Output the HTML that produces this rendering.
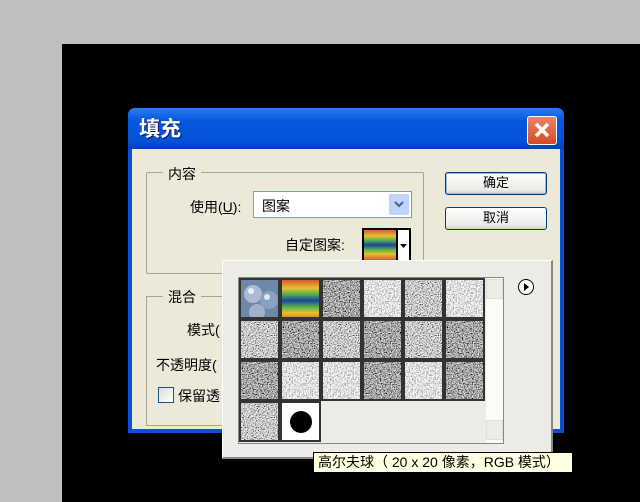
<!DOCTYPE html>
<html><head><meta charset="utf-8"><style>
*{margin:0;padding:0;box-sizing:border-box}
body{width:640px;height:502px;background:#c0c0c0;position:relative;overflow:hidden;font-family:"Liberation Sans","Noto Sans CJK SC",sans-serif;font-size:13px;color:#000}
.a{position:absolute}
.cell{position:absolute;width:41px;height:41px;border:2px solid #333;overflow:hidden;background:#999}
.cell svg{width:100%;height:100%;display:block}
.btn{position:absolute;border:1px solid #003c74;border-radius:3px;background:linear-gradient(#fff,#ecebe6 80%,#d6d0c5);text-align:center;line-height:20px;font-size:13px}
</style></head><body>
<svg width="0" height="0" style="position:absolute"><defs>
<filter id="n1"><feTurbulence type="fractalNoise" baseFrequency="0.9" numOctaves="2" seed="1"/><feColorMatrix type="saturate" values="0"/><feComponentTransfer><feFuncR type="linear" slope="3.2" intercept="-1.0"/><feFuncG type="linear" slope="3.2" intercept="-1.0"/><feFuncB type="linear" slope="3.2" intercept="-1.0"/><feFuncA type="table" tableValues="1 1"/></feComponentTransfer></filter>
<filter id="n2"><feTurbulence type="fractalNoise" baseFrequency="0.7" numOctaves="3" seed="5"/><feColorMatrix type="saturate" values="0"/><feComponentTransfer><feFuncR type="linear" slope="2.4" intercept="-0.45"/><feFuncG type="linear" slope="2.4" intercept="-0.45"/><feFuncB type="linear" slope="2.4" intercept="-0.45"/><feFuncA type="table" tableValues="1 1"/></feComponentTransfer></filter>
<filter id="n3"><feTurbulence type="fractalNoise" baseFrequency="0.8" numOctaves="2" seed="9"/><feColorMatrix type="saturate" values="0"/><feComponentTransfer><feFuncR type="linear" slope="2.4" intercept="-0.8"/><feFuncG type="linear" slope="2.4" intercept="-0.8"/><feFuncB type="linear" slope="2.4" intercept="-0.8"/><feFuncA type="table" tableValues="1 1"/></feComponentTransfer></filter>
<linearGradient id="rb" x1="0" y1="0" x2="0" y2="1"><stop offset="0" stop-color="#d85a2a"/><stop offset=".2" stop-color="#e8c030"/><stop offset=".35" stop-color="#50b050"/><stop offset=".5" stop-color="#2040a0"/><stop offset=".65" stop-color="#50b050"/><stop offset=".8" stop-color="#e8c030"/><stop offset="1" stop-color="#d85a2a"/></linearGradient>
</defs></svg>
<div class="a" style="left:62px;top:44px;width:578px;height:458px;background:#000"></div>
<div class="a" style="left:128px;top:108px;width:436px;height:325px;background:#0a4fd8;border-radius:7px 7px 0 0"></div>
<div class="a" style="left:128px;top:108px;width:436px;height:41px;background:linear-gradient(#2a7cf0,#0758e0 30%,#0352d8 80%,#0340b8);border-radius:7px 7px 0 0"></div>
<div class="a" style="left:139px;top:113px;color:#fff;font-size:21px;font-weight:bold;text-shadow:1px 1px 0 #0a1a60">填充</div>
<div class="a" style="left:527px;top:116px;width:30px;height:29px;border:1px solid #fff;border-radius:3px;background:linear-gradient(#e8846a,#d54a22)"><svg width="28" height="27"><path d="M8 7L20 19M20 7L8 19" stroke="#fff" stroke-width="3.5"/></svg></div>
<div class="a" style="left:132px;top:149px;width:428px;height:280px;background:#ece9d8"></div>
<div class="a" style="left:146px;top:172px;width:278px;height:102px;border:1px solid #a8a596;border-radius:2px"></div>
<div class="a" style="left:163px;top:164px;background:#ece9d8;padding:0 5px;font-size:14px">内容</div>
<div class="a" style="left:190px;top:197px;font-size:14px">使用(<u>U</u>):</div>
<div class="a" style="left:253px;top:191px;width:159px;height:27px;border:1px solid #7f9db9;background:#fff;padding:4px 8px;font-size:14px">图案</div>
<div class="a" style="left:389px;top:194px;width:20px;height:21px;background:#c1d3fb;border-radius:2px"><svg width="20" height="21"><path d="M6 8l4 4 4-4" stroke="#4d6185" stroke-width="2" fill="none"/></svg></div>
<div class="a" style="left:285px;top:235px;font-size:14px">自定图案:</div>
<div class="a" style="left:362px;top:228px;width:36px;height:34px;border:2px solid #000;overflow:hidden"><svg width="32" height="30"><rect width="32" height="30" fill="url(#rb)"/></svg></div>
<div class="a" style="left:397px;top:228px;width:14px;height:34px;border:2px solid #000;border-left:1px solid #000;background:#fff"><svg width="11" height="30"><path d="M2 14h7l-3.5 4z" fill="#000"/></svg></div>
<div class="btn" style="left:445px;top:172px;width:102px;height:23px;box-shadow:inset 0 0 0 1px #98b8ea">确定</div>
<div class="btn" style="left:445px;top:207px;width:102px;height:23px">取消</div>
<div class="a" style="left:146px;top:296px;width:100px;height:130px;border:1px solid #a8a596;border-right:none"></div>
<div class="a" style="left:163px;top:287px;background:#ece9d8;padding:0 5px;font-size:14px">混合</div>
<div class="a" style="left:187px;top:320px;font-size:14px">模式(</div>
<div class="a" style="left:156px;top:355px;font-size:14px">不透明度(</div>
<div class="a" style="left:158px;top:387px;width:16px;height:16px;border:1px solid #1c5180;background:linear-gradient(135deg,#dcdcd6,#fff)"></div>
<div class="a" style="left:178px;top:386px;font-size:14px">保留透</div>
<div class="a" style="left:222px;top:260px;width:331px;height:199px;background:#ecebe6;border:1px solid #fff;border-right:2px solid #888;border-bottom:2px solid #888"></div>
<div class="a" style="left:238px;top:277px;width:266px;height:167px;border:1px solid #888;background:#ecebe6"></div>
<div class="a" style="left:486px;top:278px;width:17px;height:165px;background:#fbfbf8"></div>
<div class="a" style="left:486px;top:279px;width:17px;height:20px;background:#eeede5;border:1px solid #ddd"></div>
<div class="a" style="left:486px;top:420px;width:17px;height:20px;background:#eeede5;border:1px solid #ddd"></div>
<div class="a" style="left:518px;top:279px;width:16px;height:16px;border:1px solid #000;border-radius:50%;background:#fff"><svg width="14" height="14"><path d="M5 3l5 4-5 4z" fill="#000"/></svg></div>

<div class="cell" style="left:239px;top:278px"><svg><rect width="41" height="41" fill="#6d88a8"/><circle cx="12" cy="14" r="9" fill="#a9bcd4"/><circle cx="28" cy="20" r="9" fill="#8aa2c2"/><circle cx="16" cy="32" r="8" fill="#9fb2ca"/><circle cx="10" cy="11" r="3" fill="#e6eef8"/><circle cx="26" cy="17" r="3" fill="#dfe8f4"/></svg></div>
<div class="cell" style="left:280px;top:278px"><svg><rect width="41" height="41" fill="url(#rb)"/></svg></div>
<div class="cell" style="left:321px;top:278px"><svg><rect width="41" height="41" filter="url(#n3)"/></svg></div>
<div class="cell" style="left:362px;top:278px"><svg><rect width="41" height="41" filter="url(#n2)"/></svg></div>
<div class="cell" style="left:403px;top:278px"><svg><rect width="41" height="41" filter="url(#n1)"/></svg></div>
<div class="cell" style="left:444px;top:278px"><svg><rect width="41" height="41" filter="url(#n2)"/></svg></div>
<div class="cell" style="left:239px;top:319px"><svg><rect width="41" height="41" filter="url(#n1)"/></svg></div>
<div class="cell" style="left:280px;top:319px"><svg><rect width="41" height="41" filter="url(#n3)"/></svg></div>
<div class="cell" style="left:321px;top:319px"><svg><rect width="41" height="41" filter="url(#n1)"/></svg></div>
<div class="cell" style="left:362px;top:319px"><svg><rect width="41" height="41" filter="url(#n3)"/></svg></div>
<div class="cell" style="left:403px;top:319px"><svg><rect width="41" height="41" filter="url(#n1)"/></svg></div>
<div class="cell" style="left:444px;top:319px"><svg><rect width="41" height="41" filter="url(#n3)"/></svg></div>
<div class="cell" style="left:239px;top:360px"><svg><rect width="41" height="41" filter="url(#n3)"/></svg></div>
<div class="cell" style="left:280px;top:360px"><svg><rect width="41" height="41" filter="url(#n2)"/></svg></div>
<div class="cell" style="left:321px;top:360px"><svg><rect width="41" height="41" filter="url(#n2)"/></svg></div>
<div class="cell" style="left:362px;top:360px"><svg><rect width="41" height="41" filter="url(#n3)"/></svg></div>
<div class="cell" style="left:403px;top:360px"><svg><rect width="41" height="41" filter="url(#n2)"/></svg></div>
<div class="cell" style="left:444px;top:360px"><svg><rect width="41" height="41" filter="url(#n3)"/></svg></div>
<div class="cell" style="left:239px;top:401px"><svg><rect width="41" height="41" filter="url(#n1)"/></svg></div>
<div class="cell" style="left:280px;top:401px;background:#fff"><svg><rect width="41" height="41" fill="#fff"/><circle cx="19" cy="19" r="11" fill="#000"/></svg></div>
<div class="a" style="left:313px;top:452px;width:260px;height:21px;background:#ffffe1;border:1px solid #000;font-size:14px;line-height:19px;padding-left:4px;white-space:nowrap">高尔夫球（ 20 x 20 像素，RGB 模式）</div>
</body></html>
